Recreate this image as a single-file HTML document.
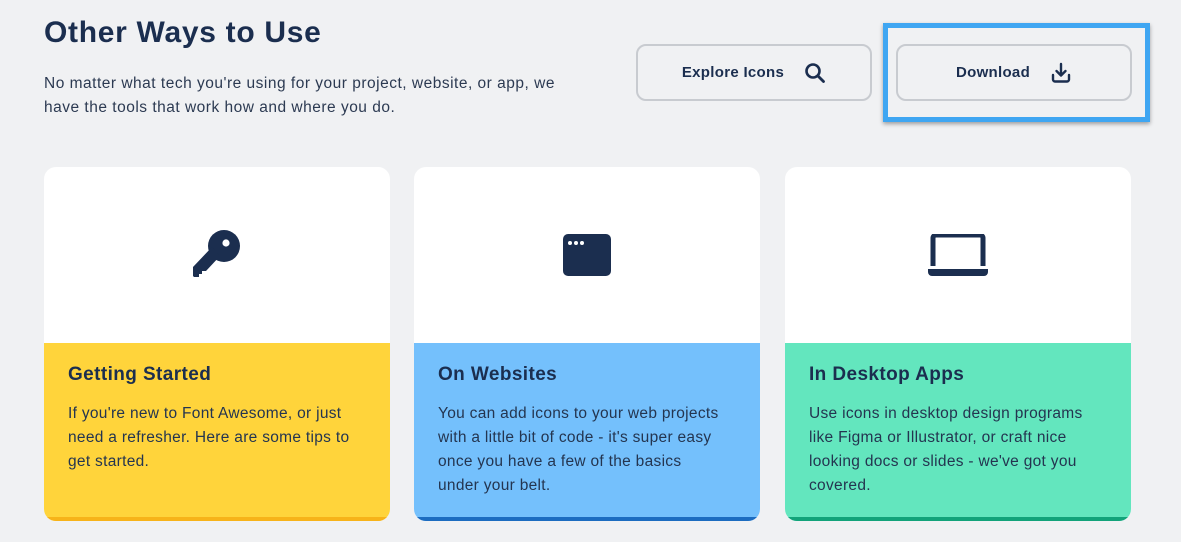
<!DOCTYPE html>
<html><head><style>
*{margin:0;padding:0;box-sizing:border-box}
body{width:1181px;height:542px;background:#f0f1f3;font-family:"Liberation Sans",sans-serif;color:#1b2e4f;position:relative;overflow:hidden}
h1{position:absolute;left:44px;top:16px;font-size:30px;font-weight:bold;letter-spacing:0.7px}
.sub{position:absolute;left:44px;top:72px;font-size:15.5px;line-height:24px;color:#2c3a52;width:520px;letter-spacing:0.5px}
.btn{position:absolute;top:44px;height:57px;border:2px solid #c8cbd0;border-radius:10px;background:#f0f1f3;display:flex;align-items:center;justify-content:center;gap:20px;font-weight:bold;font-size:15px;letter-spacing:0.3px}
.hl{position:absolute;left:883px;top:23px;width:267px;height:99px;border:5px solid #3fa6f2;box-shadow:0 2px 4px rgba(0,0,0,.35)}
.card{position:absolute;top:167px;width:346px;height:354px;border-radius:12px;background:#fff;overflow:hidden}
.card .band{position:absolute;left:0;top:176px;width:100%;height:178px;border-bottom:4px solid}
.card h2{position:absolute;left:24px;top:197px;font-size:19px;font-weight:bold;letter-spacing:0.4px}
.card p{position:absolute;left:24px;top:235px;width:292px;font-size:15.5px;line-height:24px;color:#243550;letter-spacing:0.3px}
.card svg{position:absolute}
</style></head><body>
<h1>Other Ways to Use</h1>
<div class="sub">No matter what tech you're using for your project, website, or app, we have the tools that work how and where you do.</div>
<div class="btn" style="left:636px;width:236px">Explore Icons
<svg width="22" height="22" viewBox="0 0 22 22"><circle cx="9" cy="9" r="6.5" fill="none" stroke="#1b2e4f" stroke-width="2.6"/><path d="M14 14l5.5 5.5" stroke="#1b2e4f" stroke-width="2.8" stroke-linecap="round"/></svg></div>
<div class="hl"></div>
<div class="btn" style="left:896px;width:236px">Download
<svg width="22" height="22" viewBox="0 0 22 22"><path d="M11 2v11M6.5 9l4.5 4.5L15.5 9" fill="none" stroke="#1b2e4f" stroke-width="2.4" stroke-linecap="round" stroke-linejoin="round"/><path d="M3 13v4.5a2 2 0 0 0 2 2h12a2 2 0 0 0 2-2V13" fill="none" stroke="#1b2e4f" stroke-width="2.4" stroke-linecap="round"/></svg></div>

<div class="card" style="left:44px">
<svg style="left:146px;top:62px" width="56" height="52" viewBox="0 0 56 52"><circle cx="34" cy="17" r="16" fill="#1b2e4f"/><path d="M22 18L30 27L16 42H12V45H9V48H4L3 47V38Z" fill="#1b2e4f"/><circle cx="36" cy="14" r="3.6" fill="#fff"/></svg>
<div class="band" style="background:#ffd43b;border-color:#f7b319"></div>
<h2>Getting Started</h2>
<p>If you're new to Font Awesome, or just need a refresher. Here are some tips to get started.</p></div>

<div class="card" style="left:414px">
<svg style="left:149px;top:67px" width="48" height="42" viewBox="0 0 48 42"><rect width="48" height="42" rx="5" fill="#1b2e4f"/><circle cx="7" cy="9" r="2" fill="#fff"/><circle cx="13" cy="9" r="2" fill="#fff"/><circle cx="19" cy="9" r="2" fill="#fff"/></svg>
<div class="band" style="background:#74c0fc;border-color:#1c6cc0"></div>
<h2>On Websites</h2>
<p style="width:282px">You can add icons to your web projects with a little bit of code - it's super easy once you have a few of the basics under your belt.</p></div>

<div class="card" style="left:785px">
<svg style="left:143px;top:67px" width="60" height="42" viewBox="0 0 60 42"><path d="M5 32V4a3 3 0 0 1 3-3h44a3 3 0 0 1 3 3v28" fill="none" stroke="#1b2e4f" stroke-width="5"/><path d="M0 35h60v3a4 4 0 0 1-4 4H4a4 4 0 0 1-4-4z" fill="#1b2e4f"/></svg>
<div class="band" style="background:#63e6be;border-color:#12a37a"></div>
<h2>In Desktop Apps</h2>
<p>Use icons in desktop design programs like Figma or Illustrator, or craft nice looking docs or slides - we've got you covered.</p></div>
</body></html>
